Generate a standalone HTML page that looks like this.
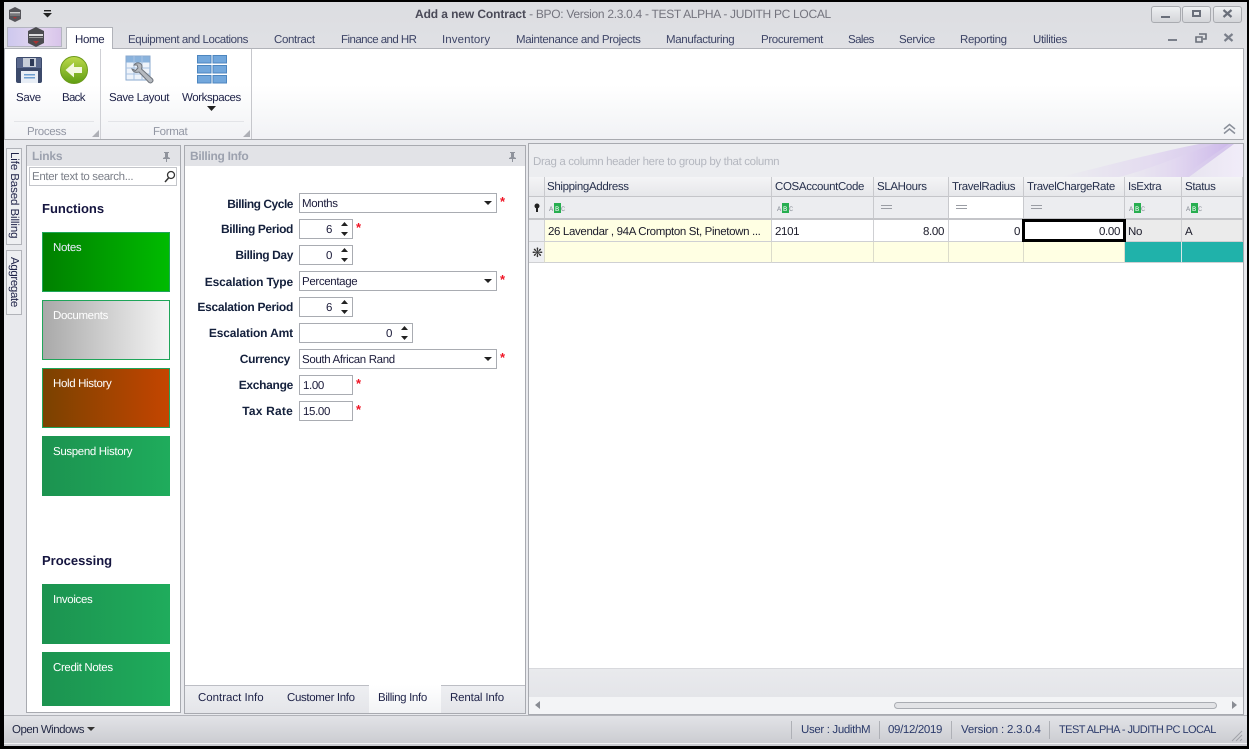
<!DOCTYPE html>
<html><head><meta charset="utf-8">
<style>
html,body{margin:0;padding:0;background:#000;}
#r{position:relative;width:1249px;height:749px;overflow:hidden;background:#000;font:11.5px "Liberation Sans",sans-serif;letter-spacing:-.35px;text-rendering:geometricPrecision;color:#1b1b3a;}
#r div,#r span.a,#r svg{position:absolute;}
.t{white-space:nowrap;line-height:16px;}
.tab{top:32px;color:#3d4466;}
#r .lab{font-weight:bold;font-size:12px;letter-spacing:-.3px;line-height:14px;text-align:right;width:120px;left:173px;color:#14203c;}
.box{background:#fff;border:1px solid #a9acb2;box-sizing:border-box;height:20px;left:299px;}
.req{color:#f01525;font-weight:bold;font-size:13px;line-height:14px;white-space:nowrap;}
.tile{left:42px;width:128px;height:60px;box-sizing:border-box;background:linear-gradient(90deg,#1c9350,#1fac5c);}
.tile span{position:absolute;left:11px;top:8px;color:#fff;line-height:16px;white-space:nowrap;}
.hc{top:177px;height:20px;background:linear-gradient(#f4f4f6,#e6e7ea);border-right:1px solid #c8c9cd;border-bottom:1px solid #c4c5c9;box-sizing:border-box;padding:3px 0 0 2px;line-height:14px;color:#26304c;white-space:nowrap;overflow:hidden;}
.fc{top:197px;height:21px;background:#ecedf0;border-right:1px solid #c8c9cd;box-sizing:border-box;}
.dc{top:220px;height:22px;background:#fff;border-right:1px solid #cfd0d3;border-bottom:1px solid #cfd0d3;box-sizing:border-box;line-height:25px;padding:0 3px;color:#1b1b2a;white-space:nowrap;overflow:hidden;}
.nc{top:242px;height:21px;background:#ffffe3;border-right:1px solid #dcdccb;border-bottom:1px solid #cfd0d3;box-sizing:border-box;}
</style></head><body>
<div id="r">
<!-- window -->
<div style="left:4px;top:2px;width:1243px;height:744px;background:linear-gradient(#dcdde1,#e7e8ec 140px);"></div>
<!-- title bar icons -->
<svg style="left:7px;top:6px" width="16" height="17" viewBox="0 0 16 17"><path d="M8 1l6 3v9l-6 3-6-3V4z" fill="#55555a"/><rect x="3" y="6" width="10" height="1.500" fill="#ccc"/><rect x="3" y="8.500" width="10" height="1" fill="#999"/><path d="M6 11h4l-2 2z" fill="#a33"/></svg>
<svg style="left:42px;top:9px" width="11" height="9" viewBox="0 0 11 9"><rect x="2" y="1" width="7" height="1.400" fill="#222"/><path d="M1 4h9L5.500 8.500z" fill="#222"/></svg>
<div class="t" style="left:415px;top:7px;color:#4a4a58;font-weight:bold;font-size:12px;line-height:14px;letter-spacing:-.1px;">Add a new Contract <span style="font-weight:normal;color:#74747e;letter-spacing:-.3px;">- BPO: Version 2.3.0.4 - TEST ALPHA - JUDITH PC LOCAL</span></div>
<!-- window buttons -->
<div style="left:1151px;top:6px;width:28px;height:15px;border:1px solid #a9abb0;border-radius:3px;background:linear-gradient(#eef0f2,#d4d5d9);"></div>
<div style="left:1182px;top:6px;width:27px;height:15px;border:1px solid #a9abb0;border-radius:3px;background:linear-gradient(#eef0f2,#d4d5d9);"></div>
<div style="left:1213px;top:6px;width:27px;height:15px;border:1px solid #a9abb0;border-radius:3px;background:linear-gradient(#eef0f2,#d4d5d9);"></div>
<div style="left:1161px;top:16px;width:9px;height:2px;background:#6a6f7a;"></div>
<div style="left:1192px;top:10px;width:5px;height:3px;border:2px solid #6a6f7a;"></div>
<svg style="left:1222px;top:9px" width="11" height="9" viewBox="0 0 11 9"><path d="M1.500 1l8 7M9.500 1l-8 7" stroke="#6a6f7a" stroke-width="2.200" fill="none"/></svg>
<!-- app button + tabs -->
<div style="left:7px;top:27px;width:55px;height:20px;box-sizing:border-box;border:1px solid #b4b5c0;background:linear-gradient(90deg,#cdc8ee,#e4d6f0 60%,#d8c4ea);"></div>
<svg style="left:26px;top:26px" width="20" height="22" viewBox="0 0 20 22"><path d="M10 1l8 4v12l-8 4-8-4V5z" fill="#4c4c50"/><rect x="3" y="8" width="14" height="2" fill="#ddd"/><rect x="3" y="11" width="14" height="1" fill="#999"/><path d="M7 15h6l-3 3z" fill="#a33"/></svg>
<div style="left:66px;top:27px;width:47px;height:22px;box-sizing:border-box;background:#fff;border:1px solid #b1b3b9;border-bottom:none;z-index:3;"></div>
<div class="t" style="left:75px;top:32px;color:#1d2147;z-index:4;">Home</div>
<div class="t tab" style="left:128px;letter-spacing:-.43px;">Equipment and Locations</div>
<div class="t tab" style="left:274px;">Contract</div>
<div class="t tab" style="left:341px;letter-spacing:-.55px;">Finance and HR</div>
<div class="t tab" style="left:442px;letter-spacing:.1px;">Inventory</div>
<div class="t tab" style="left:516px;">Maintenance and Projects</div>
<div class="t tab" style="left:666px;">Manufacturing</div>
<div class="t tab" style="left:761px;">Procurement</div>
<div class="t tab" style="left:848px;letter-spacing:-.6px;">Sales</div>
<div class="t tab" style="left:899px;">Service</div>
<div class="t tab" style="left:960px;">Reporting</div>
<div class="t tab" style="left:1033px;">Utilities</div>
<div style="left:1168px;top:39px;width:9px;height:2px;background:#7a7f8a;"></div>
<svg style="left:1195px;top:33px" width="12" height="10" viewBox="0 0 12 10"><path d="M4 1h7v5H8M1 4h6v5H1z" stroke="#6a6f7a" stroke-width="1.600" fill="none"/></svg>
<svg style="left:1223px;top:33px" width="11" height="9" viewBox="0 0 11 9"><path d="M1.500 1l8 7M9.500 1l-8 7" stroke="#7a7f8a" stroke-width="2.200" fill="none"/></svg>
<!-- ribbon -->
<div style="left:4px;top:48px;width:1240px;height:92px;box-sizing:border-box;border:1px solid #b1b3b9;border-bottom:1px solid #a8aaaf;background:linear-gradient(#fff,#fff 40%,#f1f2f5);"></div>
<div style="left:100px;top:49px;width:1px;height:90px;background:#cfd0d5;"></div>
<div style="left:251px;top:49px;width:1px;height:90px;background:#c6c7cc;"></div>
<div style="left:14px;top:121px;width:80px;height:1px;background:#e3e4e8;"></div>
<div style="left:108px;top:121px;width:136px;height:1px;background:#e3e4e8;"></div>
<!-- save icon -->
<svg style="left:16px;top:56px" width="27" height="28" viewBox="0 0 27 28"><rect x="0" y="1" width="26" height="26" rx="2" fill="#3c4a6b"/><rect x="1" y="2" width="24" height="10" fill="#5a688c"/><rect x="7" y="2" width="13" height="9" fill="#c8ced8"/><rect x="14" y="3" width="4" height="7" fill="#2e3a58"/><rect x="5" y="15" width="17" height="12" fill="#e8eef6"/><rect x="8" y="18" width="11" height="1.500" fill="#6e9fd0"/><rect x="8" y="21" width="11" height="1.500" fill="#6e9fd0"/></svg>
<!-- back icon -->
<svg style="left:60px;top:56px" width="28" height="28" viewBox="0 0 28 28"><defs><linearGradient id="g" x1="0" y1="0" x2="0" y2="1"><stop offset="0" stop-color="#bcd94a"/><stop offset="1" stop-color="#5f9d12"/></linearGradient></defs><circle cx="14" cy="14" r="13.500" fill="url(#g)" stroke="#6c9a1c"/><path d="M5.500 14L14 6.500V11h8v6h-8v4.500z" fill="#f3f8df"/></svg>
<!-- save layout icon -->
<svg style="left:125px;top:54px" width="32" height="32" viewBox="0 0 32 32"><rect x="1" y="2" width="24" height="24" fill="#eef3fa" stroke="#8aa9cf"/><rect x="1.500" y="2.500" width="23" height="6" fill="#8ab3dd"/><path d="M9 2v24M17 2v24M1 14h24M1 20h24" stroke="#a9c3e2" fill="none"/><path d="M9 11c2-3 7-3 8 1 0 1 0 2-.5 3l11 10c1.500 2-1 5-3.500 3.500L14 18c-3 1-6 0-7-3l3.500 1.500 2.500-2.500-1-3z" fill="#b5b9bf" stroke="#6f747c"/></svg>
<!-- workspaces icon -->
<svg style="left:197px;top:55px" width="30" height="29" viewBox="0 0 30 29"><g fill="#72a7dc" stroke="#4d86bf"><rect x=".5" y=".5" width="13.500" height="7.500"/><rect x="16" y=".5" width="13.500" height="7.500"/><rect x=".5" y="10.500" width="13.500" height="7.500"/><rect x="16" y="10.500" width="13.500" height="7.500"/><rect x=".5" y="20.500" width="13.500" height="7.500"/><rect x="16" y="20.500" width="13.500" height="7.500"/></g></svg>
<div class="t" style="left:16px;top:90px;color:#1d2147;">Save</div>
<div class="t" style="left:62px;top:90px;color:#1d2147;letter-spacing:-.7px;">Back</div>
<div class="t" style="left:109px;top:90px;color:#1d2147;">Save Layout</div>
<div class="t" style="left:182px;top:90px;color:#1d2147;letter-spacing:-.42px;">Workspaces</div>
<svg style="left:207px;top:106px" width="9" height="5" viewBox="0 0 9 5"><path d="M0 0h9L4.500 5z" fill="#222"/></svg>
<div class="t" style="left:27px;top:124px;color:#9296a3;">Process</div>
<div class="t" style="left:153px;top:124px;color:#9296a3;">Format</div>
<svg style="left:92px;top:130px" width="7" height="7" viewBox="0 0 7 7"><path d="M7 0v7H0z" fill="#aeb0b6"/></svg>
<svg style="left:243px;top:130px" width="7" height="7" viewBox="0 0 7 7"><path d="M7 0v7H0z" fill="#aeb0b6"/></svg>
<svg style="left:1222px;top:123px" width="15" height="12" viewBox="0 0 15 12"><path d="M2 6l5.500-4.500L13 6M2 10.500L7.500 6l5.500 4.500" stroke="#8a8f9a" stroke-width="1.500" fill="none"/></svg>
<!-- main area -->
<div style="left:4px;top:140px;width:1240px;height:575px;background:#e8e9ed;"></div>
<!-- left side tabs -->
<div style="left:6px;top:148px;width:16px;height:97px;box-sizing:border-box;border:1px solid #b1b3b9;background:#eeeff2;"></div>
<div style="left:6px;top:250px;width:16px;height:65px;box-sizing:border-box;border:1px solid #b1b3b9;background:#eeeff2;"></div>
<div class="t" style="left:7px;top:152px;writing-mode:vertical-rl;line-height:14px;letter-spacing:-.1px;color:#1d2147;">Life Based Billing</div>
<div class="t" style="left:7px;top:257px;writing-mode:vertical-rl;line-height:14px;color:#1d2147;">Aggregate</div>
<!-- links panel -->
<div style="left:26px;top:145px;width:155px;height:568px;box-sizing:border-box;border:1px solid #a8aab0;background:#fff;"></div>
<div style="left:27px;top:146px;width:153px;height:20px;background:#e2e3e7;"></div>
<div class="t" style="left:32px;top:148px;font-weight:bold;font-size:12px;letter-spacing:-.2px;color:#9ca1ae;">Links</div>
<svg style="left:162px;top:151px" width="9" height="11" viewBox="0 0 9 11"><path d="M2 1h5v1H6v4l2 1v1H5v3H4V8H1V7l2-1V2H2z" fill="#8f939c"/></svg>
<div style="left:29px;top:167px;width:148px;height:19px;box-sizing:border-box;border:1px solid #c3c5ca;background:#fff;"></div>
<div class="t" style="left:32px;top:169px;color:#7b7f88;">Enter text to search...</div>
<svg style="left:163px;top:170px" width="13" height="13" viewBox="0 0 13 13"><circle cx="8" cy="5" r="3.500" fill="none" stroke="#333" stroke-width="1.300"/><path d="M5.500 8L2 12" stroke="#333" stroke-width="1.500"/></svg>
<div class="t" style="left:42px;top:201px;font-weight:bold;font-size:13px;letter-spacing:0;color:#15153f;">Functions</div>
<div class="tile" style="top:232px;background:linear-gradient(90deg,#008000,#00bb00);border:1px solid #1fa55a;"><span style="left:10px;top:7px;color:#eef;">Notes</span></div>
<div class="tile" style="top:300px;background:linear-gradient(90deg,#a9a9a9,#f4f4f4);border:1px solid #1fa55a;"><span style="left:10px;top:7px;">Documents</span></div>
<div class="tile" style="top:368px;background:linear-gradient(90deg,#7a4200,#c44500);border:1px solid #1fa55a;"><span style="left:10px;top:7px;">Hold History</span></div>
<div class="tile" style="top:436px;"><span>Suspend History</span></div>
<div class="t" style="left:42px;top:553px;font-weight:bold;font-size:13px;letter-spacing:0;color:#15153f;">Processing</div>
<div class="tile" style="top:584px;"><span>Invoices</span></div>
<div class="tile" style="top:652px;height:54px;"><span>Credit Notes</span></div>
<!-- billing panel -->
<div style="left:184px;top:145px;width:342px;height:569px;box-sizing:border-box;border:1px solid #a8aab0;background:#fff;"></div>
<div style="left:185px;top:146px;width:340px;height:20px;background:#e2e3e7;"></div>
<div class="t" style="left:190px;top:148px;font-weight:bold;font-size:12px;letter-spacing:-.3px;color:#9ca1ae;">Billing Info</div>
<svg style="left:508px;top:151px" width="9" height="11" viewBox="0 0 9 11"><path d="M2 1h5v1H6v4l2 1v1H5v3H4V8H1V7l2-1V2H2z" fill="#8f939c"/></svg>

<div class="t lab" style="top:197px;letter-spacing:-.48px;">Billing Cycle</div>
<div class="t lab" style="top:222px;letter-spacing:-.38px;">Billing Period</div>
<div class="t lab" style="top:248px;letter-spacing:-.4px;">Billing Day</div>
<div class="t lab" style="top:275px;letter-spacing:-.15px;">Escalation Type</div>
<div class="t lab" style="top:300px;">Escalation Period</div>
<div class="t lab" style="top:326px;letter-spacing:-.15px;">Escalation Amt</div>
<div class="t lab" style="top:352px;left:170px;">Currency</div>
<div class="t lab" style="top:378px;">Exchange</div>
<div class="t lab" style="top:404px;letter-spacing:.2px;">Tax Rate</div>

<div class="box" style="top:193px;width:198px;"></div><div class="t" style="left:302px;top:196px;">Months</div>
<svg style="left:484px;top:201px" width="8" height="4" viewBox="0 0 8 4"><path d="M0 0h8L4 4z" fill="#222"/></svg><div class="req" style="left:500px;top:195px;">*</div>

<div class="box" style="top:219px;width:54px;"></div><div class="t" style="left:326px;top:222px;">6</div>
<svg style="left:340px;top:221px" width="9" height="16" viewBox="0 0 9 16"><path d="M1 5h7L4.500 1zM1 11h7l-3.500 4z" fill="#222"/></svg><div class="req" style="left:356px;top:221px;">*</div>

<div class="box" style="top:245px;width:54px;"></div><div class="t" style="left:326px;top:248px;">0</div>
<svg style="left:340px;top:247px" width="9" height="16" viewBox="0 0 9 16"><path d="M1 5h7L4.500 1zM1 11h7l-3.500 4z" fill="#222"/></svg>

<div class="box" style="top:271px;width:198px;"></div><div class="t" style="left:302px;top:274px;">Percentage</div>
<svg style="left:484px;top:279px" width="8" height="4" viewBox="0 0 8 4"><path d="M0 0h8L4 4z" fill="#222"/></svg><div class="req" style="left:500px;top:273px;">*</div>

<div class="box" style="top:297px;width:54px;"></div><div class="t" style="left:326px;top:300px;">6</div>
<svg style="left:340px;top:299px" width="9" height="16" viewBox="0 0 9 16"><path d="M1 5h7L4.500 1zM1 11h7l-3.500 4z" fill="#222"/></svg>

<div class="box" style="top:323px;width:114px;"></div><div class="t" style="left:386px;top:326px;">0</div>
<svg style="left:400px;top:325px" width="9" height="16" viewBox="0 0 9 16"><path d="M1 5h7L4.500 1zM1 11h7l-3.500 4z" fill="#222"/></svg>

<div class="box" style="top:349px;width:198px;"></div><div class="t" style="left:302px;top:352px;">South African Rand</div>
<svg style="left:484px;top:357px" width="8" height="4" viewBox="0 0 8 4"><path d="M0 0h8L4 4z" fill="#222"/></svg><div class="req" style="left:500px;top:351px;">*</div>

<div class="box" style="top:375px;width:54px;"></div><div class="t" style="left:303px;top:378px;">1.00</div><div class="req" style="left:356px;top:377px;">*</div>
<div class="box" style="top:401px;width:54px;"></div><div class="t" style="left:303px;top:404px;">15.00</div><div class="req" style="left:356px;top:403px;">*</div>

<!-- bottom tabs -->
<div style="left:185px;top:685px;width:340px;height:28px;background:linear-gradient(#eeeff2,#e4e5e9);"></div>
<div style="left:185px;top:685px;width:184px;height:1px;background:#bcbec4;"></div>
<div style="left:369px;top:685px;width:72px;height:28px;background:linear-gradient(#fff,#f2f3f5);"></div>
<div style="left:441px;top:685px;width:84px;height:1px;background:#bcbec4;"></div>
<div class="t" style="left:198px;top:690px;color:#1d2147;letter-spacing:-.02px;">Contract Info</div>
<div class="t" style="left:287px;top:690px;color:#1d2147;">Customer Info</div>
<div class="t" style="left:378px;top:690px;color:#1d2147;">Billing Info</div>
<div class="t" style="left:450px;top:690px;color:#1d2147;letter-spacing:-.15px;">Rental Info</div>

<!-- grid -->
<div style="left:528px;top:143px;width:716px;height:572px;box-sizing:border-box;border:1px solid #a8aab0;background:#fff;"></div>
<div style="left:529px;top:144px;width:714px;height:33px;background:#ecedf0;overflow:hidden;">
<svg style="left:0;top:0" width="714" height="33" viewBox="0 0 714 33"><defs><linearGradient id="p" x1="0" y1="0" x2="1" y2="0"><stop offset="0" stop-color="#ecedf0"/><stop offset=".5" stop-color="#e2d8f0"/><stop offset="1" stop-color="#cdb9ea"/></linearGradient><linearGradient id="q" x1="0" y1="0" x2="1" y2="0"><stop offset="0" stop-color="#ecedf0"/><stop offset="1" stop-color="#ffffff"/></linearGradient></defs><path d="M530 33C570 24 620 10 670 0H714V33z" fill="url(#p)" opacity=".85"/><path d="M590 33C625 24 655 10 685 0H700C680 14 665 24 655 33z" fill="url(#p)"/><path d="M660 33L705 0h9V33z" fill="url(#q)" opacity=".7"/></svg></div>
<div class="t" style="left:533px;top:154px;color:#b4b7bf;">Drag a column header here to group by that column</div>
<div class="hc" style="left:529px;width:16px;"></div>
<div class="hc" style="left:545px;width:227px;">ShippingAddress</div>
<div class="hc" style="left:772px;width:102px;padding-left:3px;">COSAccountCode</div>
<div class="hc" style="left:874px;width:75px;padding-left:3px;">SLAHours</div>
<div class="hc" style="left:949px;width:75px;padding-left:3px;">TravelRadius</div>
<div class="hc" style="left:1024px;width:101px;padding-left:3px;">TravelChargeRate</div>
<div class="hc" style="left:1125px;width:57px;padding-left:3px;">IsExtra</div>
<div class="hc" style="left:1182px;width:61px;padding-left:3px;">Status</div>
<div class="fc" style="left:529px;width:16px;"></div>
<svg style="left:533px;top:203px" width="8" height="10" viewBox="0 0 8 10"><circle cx="4" cy="3" r="2.500" fill="#222"/><path d="M3 4h2v5H3z" fill="#222"/></svg>
<div class="fc" style="left:545px;width:227px;"></div>
<div class="fc" style="left:772px;width:102px;"></div>
<div class="fc" style="left:874px;width:75px;"></div>
<div class="fc" style="left:949px;width:75px;background:#fff;"></div>
<div class="fc" style="left:1024px;width:101px;"></div>
<div class="fc" style="left:1125px;width:57px;"></div>
<div class="fc" style="left:1182px;width:61px;"></div>
<!-- ABC filter icons -->
<svg style="left:549px;top:203px" width="16" height="10" viewBox="0 0 16 10"><rect x="5" y="0" width="7" height="10" fill="#27ae50"/><text x="0" y="8" font-size="7" font-family="Liberation Mono" fill="#8a8f98">A</text><text x="6" y="8" font-size="7" font-family="Liberation Mono" fill="#fff">B</text><text x="12" y="8" font-size="7" font-family="Liberation Mono" fill="#8a8f98">C</text></svg>
<svg style="left:777px;top:203px" width="16" height="10" viewBox="0 0 16 10"><rect x="5" y="0" width="7" height="10" fill="#27ae50"/><text x="0" y="8" font-size="7" font-family="Liberation Mono" fill="#8a8f98">A</text><text x="6" y="8" font-size="7" font-family="Liberation Mono" fill="#fff">B</text><text x="12" y="8" font-size="7" font-family="Liberation Mono" fill="#8a8f98">C</text></svg>
<svg style="left:1129px;top:203px" width="16" height="10" viewBox="0 0 16 10"><rect x="5" y="0" width="7" height="10" fill="#27ae50"/><text x="0" y="8" font-size="7" font-family="Liberation Mono" fill="#8a8f98">A</text><text x="6" y="8" font-size="7" font-family="Liberation Mono" fill="#fff">B</text><text x="12" y="8" font-size="7" font-family="Liberation Mono" fill="#8a8f98">C</text></svg>
<svg style="left:1186px;top:203px" width="16" height="10" viewBox="0 0 16 10"><rect x="5" y="0" width="7" height="10" fill="#27ae50"/><text x="0" y="8" font-size="7" font-family="Liberation Mono" fill="#8a8f98">A</text><text x="6" y="8" font-size="7" font-family="Liberation Mono" fill="#fff">B</text><text x="12" y="8" font-size="7" font-family="Liberation Mono" fill="#8a8f98">C</text></svg>
<!-- equals icons -->
<svg style="left:881px;top:205px" width="11" height="5" viewBox="0 0 11 5"><path d="M0 .5h11M0 3.500h11" stroke="#9a9da4"/></svg>
<svg style="left:956px;top:205px" width="11" height="5" viewBox="0 0 11 5"><path d="M0 .5h11M0 3.500h11" stroke="#9a9da4"/></svg>
<svg style="left:1031px;top:205px" width="11" height="5" viewBox="0 0 11 5"><path d="M0 .5h11M0 3.500h11" stroke="#9a9da4"/></svg>
<div style="left:529px;top:218px;width:714px;height:2px;background:#c4c5c9;"></div>
<!-- rows -->
<div class="dc" style="left:529px;width:16px;background:#eeeff2;"></div>
<div class="dc" style="left:545px;width:227px;background:#ffffe3;">26 Lavendar , 94A Crompton St, Pinetown ...</div>
<div class="dc" style="left:772px;width:102px;">2101</div>
<div class="dc" style="left:874px;width:75px;text-align:right;padding-right:4px;">8.00</div>
<div class="dc" style="left:949px;width:75px;text-align:right;">0</div>
<div class="dc" style="left:1125px;width:57px;background:#ebebeb;">No</div>
<div class="dc" style="left:1182px;width:61px;background:#ebebeb;">A</div>
<div class="dc" style="left:1022px;width:104px;height:23px;top:219px;border:3px solid #000;text-align:right;line-height:20px;padding:0 3px 0 2px;z-index:2;">0.00</div>
<div class="nc" style="left:529px;width:16px;background:#eeeff2;"></div>
<div class="t" style="left:532px;top:245px;font-size:13px;color:#333;">&#10059;</div>
<div class="nc" style="left:545px;width:227px;"></div>
<div class="nc" style="left:772px;width:102px;"></div>
<div class="nc" style="left:874px;width:75px;"></div>
<div class="nc" style="left:949px;width:75px;"></div>
<div class="nc" style="left:1024px;width:101px;"></div>
<div class="nc" style="left:1125px;width:57px;background:#20b2aa;border-right:1px solid #d8e8e8;"></div>
<div class="nc" style="left:1182px;width:61px;background:#20b2aa;border-right:none;"></div>
<!-- grid bottom -->
<div style="left:529px;top:668px;width:714px;height:29px;background:linear-gradient(#e9eaed,#e4e5e9);border-top:1px solid #d8d9dd;box-sizing:border-box;"></div>
<div style="left:529px;top:697px;width:714px;height:17px;background:#f3f4f6;"></div>
<div style="left:894px;top:702px;width:323px;height:7px;box-sizing:border-box;border:1px solid #a9acb2;border-radius:4px;background:#e2e3e6;"></div>
<svg style="left:535px;top:701px" width="5" height="8" viewBox="0 0 5 8"><path d="M5 0v8L0 4z" fill="#8a8d94"/></svg>
<svg style="left:1232px;top:701px" width="5" height="8" viewBox="0 0 5 8"><path d="M0 0v8l5-4z" fill="#8a8d94"/></svg>
<!-- status bar -->
<div style="left:4px;top:715px;width:1243px;height:31px;box-sizing:border-box;border-top:1px solid #b1b3b9;background:linear-gradient(#e2e3e7,#c9cacf);"></div>
<div style="left:4px;top:743px;width:1243px;height:1px;background:#f0f0f2;"></div>
<div class="t" style="left:12px;top:722px;color:#242a46;letter-spacing:-.5px;">Open Windows</div>
<svg style="left:87px;top:727px" width="8" height="4" viewBox="0 0 8 4"><path d="M0 0h8L4 4z" fill="#333"/></svg>
<div style="left:791px;top:721px;width:1px;height:18px;background:#aeb0b6;"></div>
<div style="left:879px;top:721px;width:1px;height:18px;background:#aeb0b6;"></div>
<div style="left:951px;top:721px;width:1px;height:18px;background:#aeb0b6;"></div>
<div style="left:1049px;top:721px;width:1px;height:18px;background:#aeb0b6;"></div>
<div class="t" style="left:801px;top:722px;color:#2b3a6a;">User : JudithM</div>
<div class="t" style="left:888px;top:722px;color:#2b3a6a;">09/12/2019</div>
<div class="t" style="left:961px;top:722px;color:#2b3a6a;letter-spacing:-.2px;">Version : 2.3.0.4</div>
<div class="t" style="left:1059px;top:722px;color:#2b3a6a;font-size:11px;letter-spacing:-.55px;">TEST ALPHA - JUDITH PC LOCAL</div>
<svg style="left:1231px;top:730px" width="12" height="12" viewBox="0 0 12 12"><path d="M11 1L1 11M11 5l-6 6M11 9l-2 2" stroke="#a0a2a8" fill="none"/></svg>
</div>
</body></html>
